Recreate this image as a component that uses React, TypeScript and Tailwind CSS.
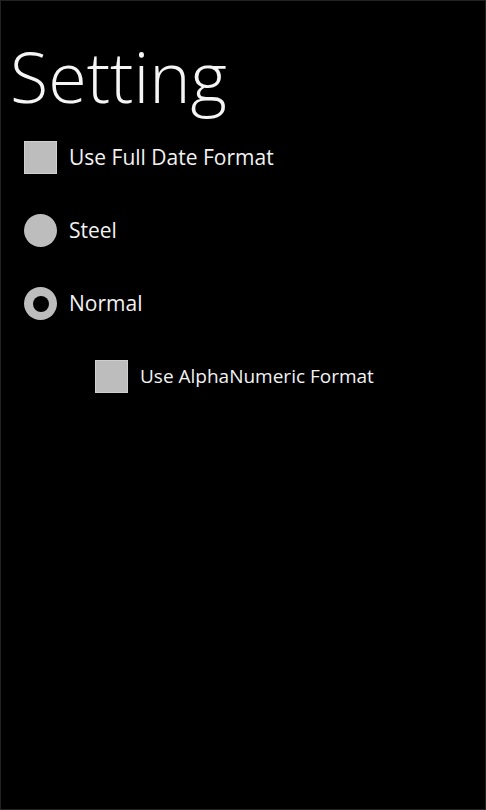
import React from 'react';

const font = { fontFamily: '"Open Sans", "Noto Sans", sans-serif' };

const CheckBox = ({ label, small }: { label: string; small?: boolean }) => (
  <div className="flex h-[73px] items-center gap-[12px]">
    <div className="h-[33px] w-[33px] border border-[#cfcfcf] bg-[#bdbdbd]" />
    <span className={small ? 'text-[19px] text-[#f2f2f2]' : 'text-[21px] text-[#f2f2f2]'}>{label}</span>
  </div>
);

const Radio = ({ label, checked }: { label: string; checked?: boolean }) => (
  <div className="flex h-[73px] items-center gap-[12px]">
    <div className="flex h-[33px] w-[33px] items-center justify-center rounded-full bg-[#bdbdbd]">
      {checked && <div className="h-[16px] w-[16px] rounded-full bg-black" />}
    </div>
    <span className="text-[21px] text-[#f2f2f2]">{label}</span>
  </div>
);

export default function App() {
  return (
    <div className="h-[810px] w-[486px] overflow-hidden border border-[#222] bg-black" style={font}>
      <h1 className="pl-[9px] pt-[30px] text-[70px] font-light leading-[90px] text-[#f5f5f5]">Setting</h1>
      <div className="flex flex-col pl-[23px]">
        <CheckBox label="Use Full Date Format" />
        <Radio label="Steel" />
        <Radio label="Normal" checked />
        <div className="pl-[71px]">
          <CheckBox label="Use AlphaNumeric Format" small />
        </div>
      </div>
    </div>
  );
}
